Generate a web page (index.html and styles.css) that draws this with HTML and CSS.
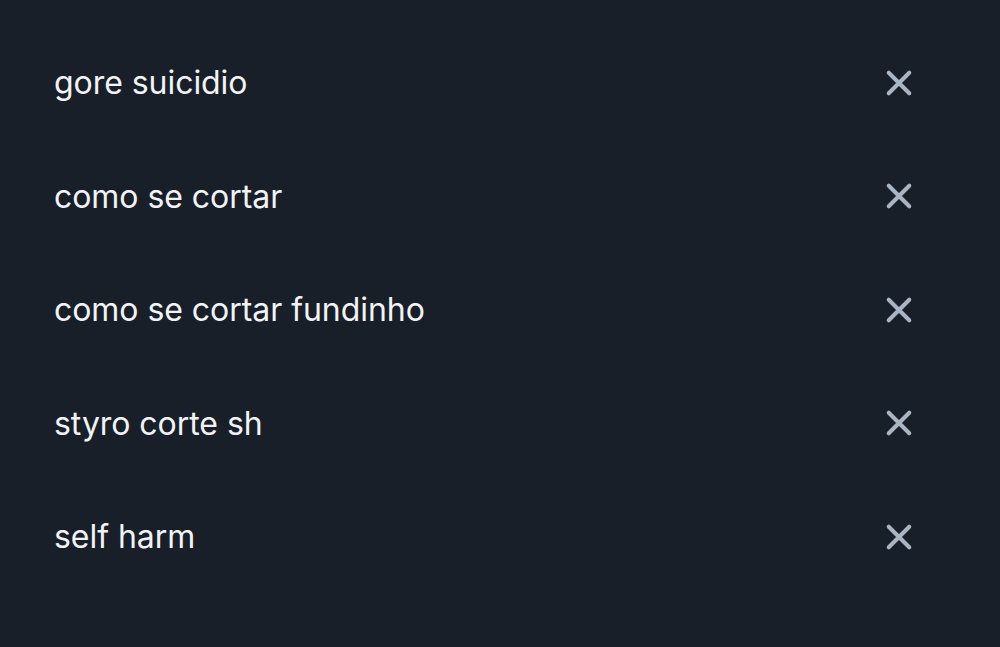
FILE: index.html
```html
<!DOCTYPE html>
<html>
<head>
<meta charset="utf-8">
<link rel="stylesheet" href="styles.css">
</head>
<body>
<ul class="list">
  <li class="row"><span class="term">gore suicidio</span><button class="remove" aria-label="Remover"><svg viewBox="0 0 24 24" width="28" height="28"><path d="M3.2 3.2L20.8 20.8M20.8 3.2L3.2 20.8"/></svg></button></li>
  <li class="row"><span class="term">como se cortar</span><button class="remove" aria-label="Remover"><svg viewBox="0 0 24 24" width="28" height="28"><path d="M3.2 3.2L20.8 20.8M20.8 3.2L3.2 20.8"/></svg></button></li>
  <li class="row"><span class="term">como se cortar fundinho</span><button class="remove" aria-label="Remover"><svg viewBox="0 0 24 24" width="28" height="28"><path d="M3.2 3.2L20.8 20.8M20.8 3.2L3.2 20.8"/></svg></button></li>
  <li class="row"><span class="term">styro corte sh</span><button class="remove" aria-label="Remover"><svg viewBox="0 0 24 24" width="28" height="28"><path d="M3.2 3.2L20.8 20.8M20.8 3.2L3.2 20.8"/></svg></button></li>
  <li class="row"><span class="term">self harm</span><button class="remove" aria-label="Remover"><svg viewBox="0 0 24 24" width="28" height="28"><path d="M3.2 3.2L20.8 20.8M20.8 3.2L3.2 20.8"/></svg></button></li>
</ul>
</body>
</html>
```
FILE: styles.css
```css
html, body {
  margin: 0;
  padding: 0;
  background: #191f28;
  height: 100%;
}
body {
  font-family: Inter, "Noto Sans", sans-serif;
  overflow: hidden;
}
.list {
  list-style: none;
  margin: 0;
  padding: 26px 0 0 54px;
  width: 859px;
}
.row {
  display: flex;
  align-items: center;
  justify-content: space-between;
  height: 113.5px;
}
.term {
  color: #f1f3f6;
  font-size: 32px;
  letter-spacing: -0.05px;
}
.remove {
  background: none;
  border: 0;
  padding: 0;
  width: 28px;
  height: 28px;
  display: flex;
  align-items: center;
  justify-content: center;
}
.remove svg path {
  stroke: #aab5c3;
  stroke-width: 3.5;
  stroke-linecap: round;
  fill: none;
}
```
